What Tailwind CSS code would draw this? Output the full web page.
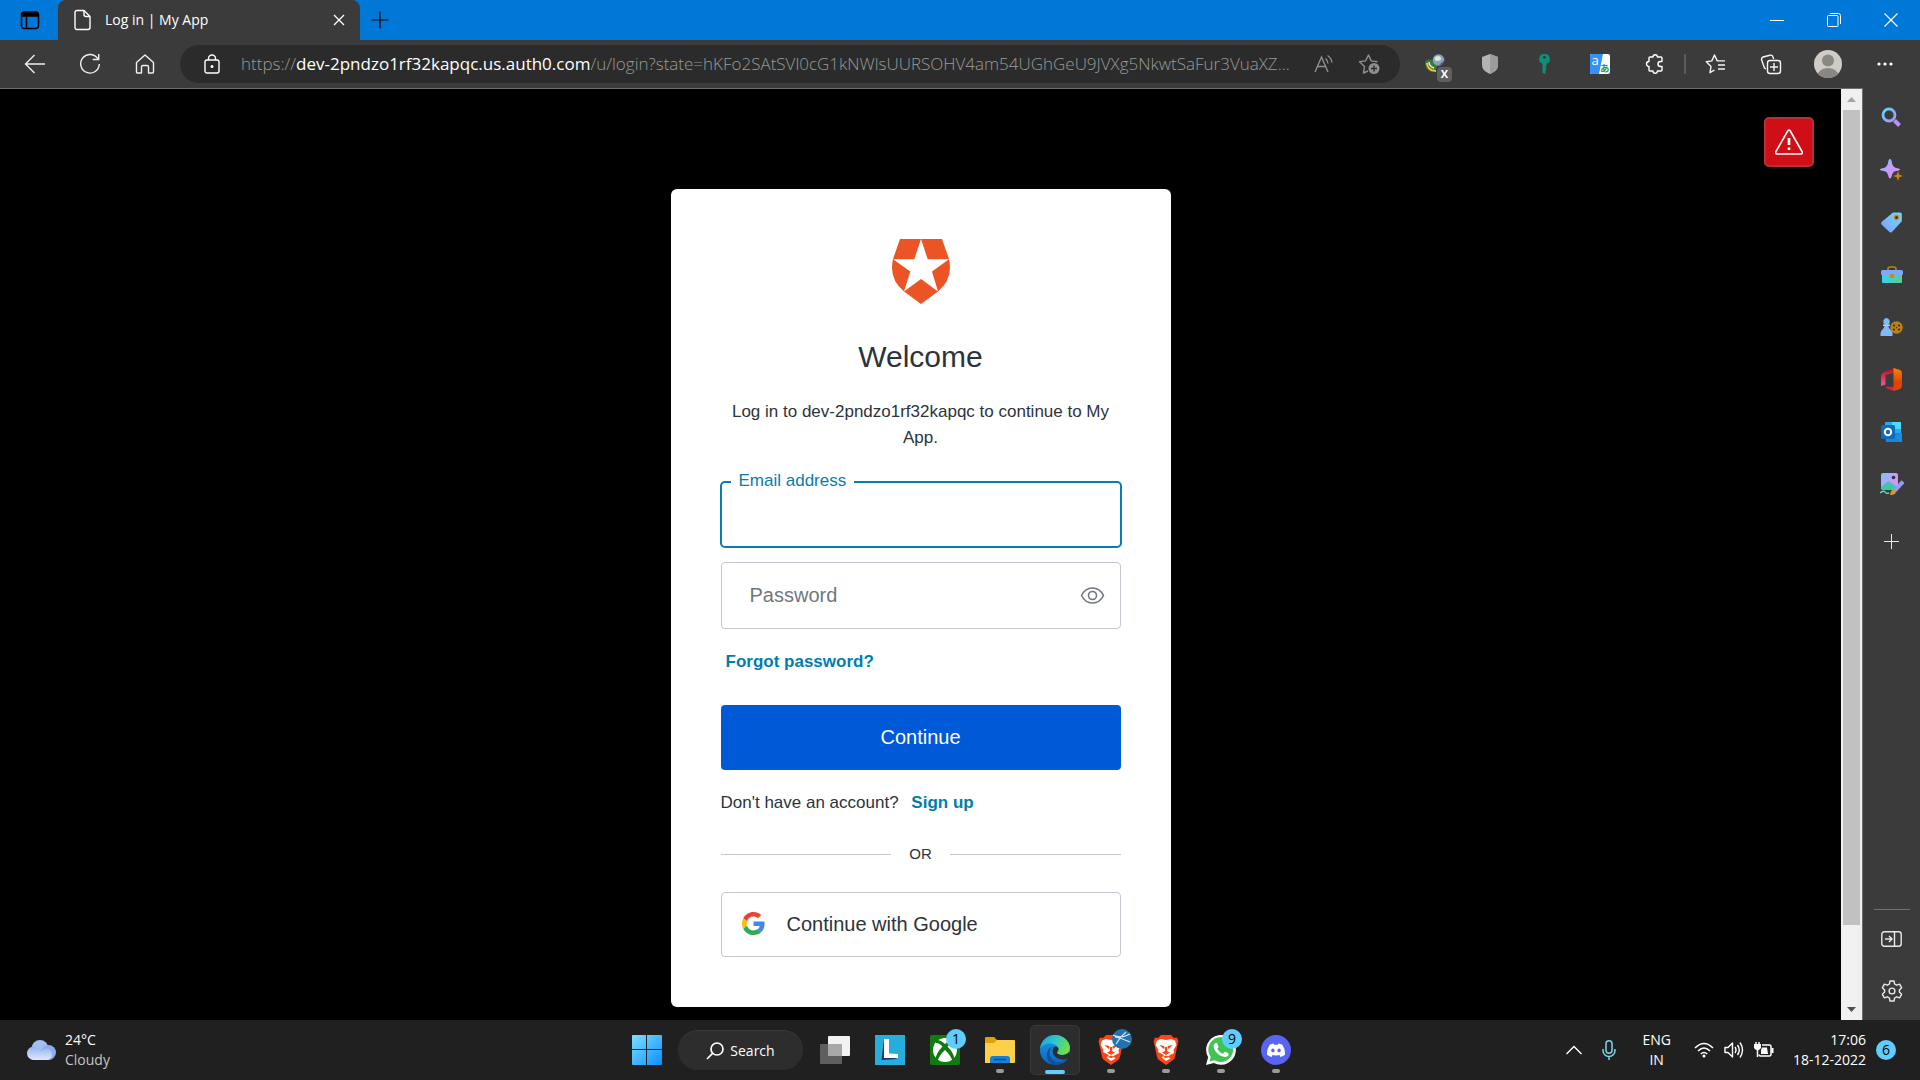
<!DOCTYPE html>
<html lang="en">
<head>
  <meta charset="UTF-8" />
  <meta name="viewport" content="width=device-width, initial-scale=1.0" />
  <title>Log in | My App</title>
  <script src="https://cdn.jsdelivr.net/npm/@tailwindcss/browser@4"></script>
</head>
<body class="min-h-screen flex flex-col bg-[#3b3b3b] text-white font-['Open_Sans','Noto_Sans',sans-serif]">

  <!-- Tab strip -->
  <header>
    <div class="flex h-10 bg-[#0078d7]">
      <button aria-label="Tab actions" class="w-[58px] pl-0.5 flex items-center justify-center text-black">
        <svg width="20" height="20" viewBox="0 0 20 20" fill="none" stroke="currentColor" stroke-width="1.5"><rect x="1.5" y="2" width="17" height="16.5" rx="3"/><path d="M2 4.5h16" stroke-width="4.5"/><path d="M6.5 6v12"/></svg>
      </button>
      <div class="w-[302px] flex items-center bg-[#3b3b3b] rounded-t-lg pl-4 pr-[11px]">
        <svg width="18" height="22" viewBox="0 0 18 22" fill="none" stroke="#fff" stroke-width="1.4" stroke-linejoin="round"><path d="M3 1.5h7l6 6v11a2 2 0 0 1-2 2H3a2 2 0 0 1-2-2v-15a2 2 0 0 1 2-2z"/><path d="M10 1.5v4a2 2 0 0 0 2 2h4"/></svg>
        <span class="ml-[13px] flex-1 text-sm">Log in | My App</span>
        <button aria-label="Close tab" class="p-1">
          <svg width="12" height="12" viewBox="0 0 12 12" stroke="#fff" stroke-width="1.3"><path d="M1 1l10 10M11 1L1 11"/></svg>
        </button>
      </div>
      <button aria-label="New tab" class="w-10 flex items-center justify-center">
        <svg width="18" height="18" viewBox="0 0 18 18" stroke="#000" stroke-width="1.2"><path d="M9 .5v17M.5 9h17"/></svg>
      </button>
      <div class="ml-auto flex">
        <button aria-label="Minimize" class="w-[57px] flex items-center justify-center"><svg width="14" height="14" stroke="#fff"><path d="M0 7.500h14"/></svg></button>
        <button aria-label="Restore" class="w-[57px] flex items-center justify-center"><svg width="14" height="14" viewBox="0 0 14 14" fill="none" stroke="#fff"><rect x=".5" y="2.500" width="10.500" height="11" rx="1"/><path d="M3 .5h8.500a2 2 0 0 1 2 2v8.500"/></svg></button>
        <button aria-label="Close" class="w-[58px] flex items-center justify-center"><svg width="14" height="14" viewBox="0 0 14 14" stroke="#fff" stroke-width="1.1"><path d="M.5.5l13 13M13.500.5l-13 13"/></svg></button>
      </div>
    </div>

    <!-- Toolbar -->
    <div class="flex items-center h-12 px-[7px]">
      <button aria-label="Back" class="w-[55px] flex justify-center"><svg width="22" height="20" viewBox="0 0 22 20" fill="none" stroke="#f0f0f0" stroke-width="1.4"><path d="M21 10H1.500M10.500 1l-9 9 9 9"/></svg></button>
      <button aria-label="Refresh" class="w-[55px] flex justify-center"><svg width="22" height="22" viewBox="0 0 22 22" fill="none" stroke="#f0f0f0" stroke-width="1.4"><path d="M19 6A9.300 9.300 0 1 0 20.300 11"/><path d="M19.700 1v5.500h-6"/></svg></button>
      <button aria-label="Home" class="w-[55px] flex justify-center"><svg width="20" height="22" viewBox="0 0 20 22" fill="none" stroke="#f0f0f0" stroke-width="1.4" stroke-linejoin="round"><path d="M1.500 9.500L10 2l8.500 7.500V19a1 1 0 0 1-1 1h-4v-6a1.500 1.500 0 0 0-1.500-1.500H8A1.500 1.500 0 0 0 6.500 14v6h-4a1 1 0 0 1-1-1z"/></svg></button>
      <div class="flex-1 min-w-0 h-[38px] ml-2 mr-[7px] flex items-center rounded-full bg-[#2b2b2b] pl-6">
        <svg class="shrink-0" width="16" height="20" viewBox="0 0 16 20" fill="none" stroke="#fff" stroke-width="1.400"><rect x="1" y="6" width="14" height="13" rx="2"/><path d="M4.500 6V4.500a3.500 3.500 0 0 1 7 0V6"/><circle cx="8" cy="12.500" r=".8" fill="#fff"/></svg>
        <p class="ml-[21px] flex-1 min-w-0 overflow-hidden whitespace-nowrap text-[17px] font-light text-[#9a9a9a]">https://<span class="font-normal text-white">dev-2pndzo1rf32kapqc.us.auth0.com</span>/u/login?state=hKFo2SAtSVl0cG1kNWlsUURSOHV4am54UGhGeU9JVXg5NkwtSaFur3VuaXZ...</p>
        <button aria-label="Read aloud" class="w-6 mr-[10px] shrink-0 flex justify-center"><svg width="20" height="20" viewBox="0 0 20 20" fill="none" stroke="#8f8f8f" stroke-width="1.400"><path d="M1 18L7.500 3 14 18M3.500 12.500h8"/><path d="M11.500 4.500a7 7 0 0 1 2.500 5M13.500 1.500a10 10 0 0 1 4.500 7"/></svg></button>
        <button aria-label="Add to favorites" class="w-[54px] pr-2 shrink-0 flex justify-center"><svg width="22" height="22" viewBox="0 0 22 22" fill="none" stroke="#8f8f8f" stroke-width="1.400" stroke-linejoin="round"><path d="M10 18l-4.500 2 1-6.500L1.500 8.800l6-.9L10.500 2l2.700 5.900 6.300.9"/><circle cx="16" cy="15.500" r="5.500" fill="#8f8f8f" stroke="none"/><path d="M16 12.500v6M13 15.500h6" stroke="#2b2b2b"/></svg></button>
      </div>
      <button aria-label="Download manager" class="relative w-[55px] flex justify-center">
        <svg width="22" height="20" viewBox="0 0 22 20"><path d="M1 8c2-3 6-3 8-1l5 3-3 8c-5 1-10-3-10-10z" fill="#3c7a35"/><path d="M3 9c0 4 3 8 9 8" fill="none" stroke="#e8c34a" stroke-width="2"/><path d="M5 8c0 3 2 5 5 6" fill="none" stroke="#e9e9e9" stroke-width="1.500"/><circle cx="14.500" cy="6" r="5.800" fill="#8aa0c8"/><path d="M11 3c3-2 5-1 6 1s-2 3-4 3-3-2-2-4z" fill="#dfe6cf"/><path d="M15 10c2 0 4-2 5-4 0 4-3 6-5 4z" fill="#54585f"/></svg>
        <span class="absolute left-[30px] top-[13px] w-[15px] h-[15px] rounded-sm bg-[#5f5f5f] text-[11px] leading-[14px] font-bold text-center">X</span>
      </button>
      <button aria-label="Shield" class="w-[55px] flex justify-center"><svg width="16" height="20" viewBox="0 0 16 20"><path d="M8 0l8 3v8c0 5-4 7-8 9-4-2-8-4-8-9V3z" fill="#b4b4b4"/><path d="M8 0l8 3v8c0 5-4 7-8 9z" fill="#9b9b9b"/></svg></button>
      <button aria-label="Key" class="w-[55px] flex justify-center"><svg width="11" height="20" viewBox="0 0 11 20"><path fill-rule="evenodd" d="M5.500 0a5 5 0 0 1 2 9.700v2.300l-1 1 1 1-1 1 1 1-1 1v2l-1 1-2-1V9.700A5 5 0 0 1 5.500 0zm0 1.800a1.500 1.500 0 1 0 0 3 1.500 1.500 0 0 0 0-3z" fill="#0d8f76"/></svg></button>
      <button aria-label="Translate" class="w-[55px] flex justify-center"><svg width="20" height="20" viewBox="0 0 20 20"><rect width="20" height="20" rx="2" fill="#fff"/><path d="M2 0h11L9 20H2a2 2 0 0 1-2-2V2a2 2 0 0 1 2-2z" fill="#3490fa"/><text x="1.500" y="11" font-size="13" fill="#fff" font-family="Open Sans">a</text><text x="10" y="18" font-size="9.500" font-weight="bold" fill="#37963a" font-family="Noto Sans CJK JP">あ</text></svg></button>
      <button aria-label="Extensions" class="w-[55px] flex justify-center"><svg width="20" height="20" viewBox="0 0 20 20" fill="none" stroke="#fff" stroke-width="1.400" stroke-linejoin="round"><path d="M5 3h3a2.200 2.200 0 0 1 4.400 0H16a1 1 0 0 1 1 1v3.500h-1.500a2.400 2.400 0 0 0 0 5H17V16a1 1 0 0 1-1 1h-3.600a2.200 2.200 0 0 1-4.400 0H5a1 1 0 0 1-1-1v-3.500a2.500 2.500 0 0 1 0-5V4a1 1 0 0 1 1-1z"/></svg></button>
      <div class="w-[2px] h-5 mx-[2px] bg-[#5c5c5c]"></div>
      <button aria-label="Favorites" class="w-[55px] flex justify-center"><svg width="21" height="20" viewBox="0 0 21 20" fill="none" stroke="#f5f5f5" stroke-width="1.400" stroke-linejoin="round"><path d="M9.500 16L5 18.700l1-6.200L1.300 7.800l5.500-.9L9.500 1l2.700 5.900H20M13 11h7M13 15h7"/></svg></button>
      <button aria-label="Collections" class="w-[55px] flex justify-center"><svg width="22" height="21" viewBox="0 0 22 21" fill="none" stroke="#f5f5f5" stroke-width="1.400"><path d="M6 15l-1.500-1L1.500 5.500A2.500 2.500 0 0 1 3 3l7-1.800A2.500 2.500 0 0 1 13 3l.6 2"/><rect x="7.500" y="6.500" width="13" height="13" rx="2.500"/><path d="M14 9v8M10 13h8"/></svg></button>
      <button aria-label="Profile" class="w-[59px] flex justify-center"><svg width="28" height="28" viewBox="0 0 28 28"><defs><clipPath id="av"><circle cx="14" cy="14" r="14"/></clipPath></defs><g clip-path="url(#av)"><path d="M0 0h28v28H0z" fill="#cfccc8"/><circle cx="14" cy="10.500" r="6" fill="#8b8783"/><ellipse cx="14" cy="26" rx="10.500" ry="8" fill="#8b8783"/></g></svg></button>
      <button aria-label="Settings and more" class="w-[56px] flex justify-center"><svg width="18" height="4" fill="#fff"><circle cx="3" cy="2" r="1.600"/><circle cx="9" cy="2" r="1.600"/><circle cx="15" cy="2" r="1.600"/></svg></button>
    </div>
  </header>

  <div class="flex-1 flex">
    <!-- Web page -->
    <div class="flex-1 flex border-t border-r border-[#6e6e6e]">
      <main class="relative flex-1 bg-black pt-[100px] pb-[13px] font-['Liberation_Sans',Arial,sans-serif] text-[17px] leading-[26px] text-[#2d333a]">
        <section class="w-[500px] mx-auto rounded-[6px] bg-white p-[50px]">
          <svg class="mx-auto" width="60" height="65" viewBox="0 0 60 65" fill="#eb5424"><path d="M9 0H51L58 20Q62.500 40 47 52.500L30 65 13 52.500Q-2.500 40 2 20Z"/><path fill="#fff" d="M30 0l6.700 20.300H58L41 32.500 47 52.500 30 40 13 52.500l6.300-20L2 20.300H23.300z"/></svg>
          <h1 class="mt-[35px] text-[30px] leading-9 text-center">Welcome</h1>
          <p class="mt-6 text-center">Log in to dev-2pndzo1rf32kapqc to continue to My App.</p>
          <form>
            <div class="relative -mx-px mt-[30px]">
              <label for="email" class="absolute left-[11px] -top-[13px] px-2 bg-white text-[#0a7cad]">Email address</label>
              <input id="email" type="email" class="block w-full h-[67px] px-7 text-xl border-2 border-[#0a7cad] rounded-[5px] outline-none">
            </div>
            <div class="relative mt-[14px]">
              <input id="password" type="password" aria-label="Password" placeholder="Password" class="block w-full h-[67px] px-7 text-xl border border-[#c2c8d0] rounded-[4px] placeholder:text-[#6f7780]">
              <button type="button" aria-label="Show password" class="absolute right-4 top-[25px]"><svg width="25" height="17" viewBox="0 0 25 17" fill="none" stroke="#6f7780" stroke-width="1.600"><path d="M1.500 8.500C4 3.500 8 1 12.500 1s8.500 2.500 11 7.500C21 13.500 17 16 12.500 16S4 13.500 1.500 8.500z"/><circle cx="12.500" cy="8.500" r="4"/></svg></button>
            </div>
            <a href="#" class="inline-block mt-5 ml-[5px] align-top font-bold text-[#007ead]">Forgot password?</a>
            <button type="submit" class="block w-full h-[65px] pb-0.5 mt-[30px] rounded-[4px] bg-[#0059d6] text-xl text-white">Continue</button>
          </form>
          <p class="mt-5">Don't have an account? <a href="#" class="ml-2 font-bold text-[#007ead]">Sign up</a></p>
          <div class="mt-7 flex items-center gap-[18px] text-[15px] leading-5">
            <hr class="flex-1 border-[#c2c8d0]"><span>OR</span><hr class="flex-1 border-[#c2c8d0]">
          </div>
          <button class="mt-7 w-full h-[65px] pb-0.5 flex items-center pl-5 gap-[22px] border border-[#c2c8d0] rounded-[4px] text-xl">
            <svg width="23" height="23" viewBox="0 0 48 48"><path fill="#EA4335" d="M24 9.500c3.540 0 6.710 1.220 9.210 3.600l6.850-6.850C35.900 2.380 30.470 0 24 0 14.620 0 6.510 5.380 2.560 13.220l7.980 6.190C12.430 13.720 17.740 9.500 24 9.500z"/><path fill="#4285F4" d="M46.980 24.550c0-1.570-.15-3.090-.38-4.550H24v9.020h12.940c-.58 2.960-2.260 5.480-4.780 7.180l7.730 6c4.510-4.180 7.090-10.360 7.090-17.650z"/><path fill="#FBBC05" d="M10.530 28.590c-.48-1.450-.76-2.990-.76-4.590s.27-3.140.76-4.590l-7.980-6.190C.92 16.460 0 20.120 0 24c0 3.880.92 7.540 2.560 10.780l7.970-6.190z"/><path fill="#34A853" d="M24 48c6.480 0 11.930-2.130 15.890-5.810l-7.730-6c-2.150 1.450-4.920 2.300-8.160 2.300-6.260 0-11.570-4.220-13.470-9.910l-7.980 6.190C6.510 42.620 14.620 48 24 48z"/></svg>
            Continue with Google
          </button>
        </section>
        <button aria-label="Development keys warning" class="absolute top-7 right-[27px] w-[50px] h-[50px] flex items-center justify-center rounded-[5px] border-2 border-[#b03434] bg-[#d00e17]">
          <svg width="28" height="28" viewBox="0 0 28 28" fill="none" stroke="#fff" stroke-width="1.600" stroke-linejoin="round"><path d="M13 2.500a1.200 1.200 0 0 1 2 0l12 21a1.500 1.500 0 0 1-1 2.500H2a1.500 1.500 0 0 1-1-2.500z"/><path d="M14 10v7M14 19.500v2.500" stroke-width="2.600"/></svg>
        </button>
      </main>
      <!-- Scrollbar -->
      <div class="w-[21px] flex flex-col items-center bg-[#f0f0f0]">
        <svg class="my-2" width="9" height="5" fill="#a3a3a3"><path d="M4.500 0L9 5H0z"/></svg>
        <div class="w-[17px] flex-1 bg-[#c1c1c1]"></div>
        <svg class="mt-[82px] mb-2" width="9" height="5" fill="#505050"><path d="M0 0h9L4.500 5z"/></svg>
      </div>
    </div>

    <!-- Edge sidebar -->
    <aside class="w-[57px] flex flex-col items-center">
      <svg width="0" height="0" class="absolute"><defs>
        <linearGradient id="bl" x1="0" y1="0" x2="1" y2="1"><stop stop-color="#5fd5fb"/><stop offset="1" stop-color="#a895fb"/></linearGradient>
        <linearGradient id="tg" x1="1" y1="0" x2="0" y2="1"><stop stop-color="#6fd8fb"/><stop offset="1" stop-color="#7f9ff8"/></linearGradient>
        <linearGradient id="sp" x1="0" y1="0" x2="1" y2="1"><stop stop-color="#6bc9fc"/><stop offset=".5" stop-color="#c79bfb"/><stop offset="1" stop-color="#e58bf0"/></linearGradient>
        <linearGradient id="tb" x1="0" y1="0" x2="1" y2="0"><stop stop-color="#36d3f3"/><stop offset="1" stop-color="#61c98a"/></linearGradient>
        <linearGradient id="of" x1="0" y1="0" x2="0" y2="1"><stop stop-color="#f58a00"/><stop offset=".6" stop-color="#e04400"/></linearGradient>
        <linearGradient id="ol" x1="0" y1="0" x2="0" y2="1"><stop stop-color="#b3101a"/><stop offset="1" stop-color="#f05a9a"/></linearGradient>
        <linearGradient id="win" x1="0" y1="0" x2="1" y2="1"><stop stop-color="#7fe0ff"/><stop offset="1" stop-color="#0a8eff"/></linearGradient>
      </defs></svg>
      <nav class="w-full h-[420px] grid grid-rows-8 mt-[3px]">
        <button aria-label="Search" class="flex items-center justify-center"><svg width="21" height="21" viewBox="0 0 21 21" fill="none"><circle cx="8" cy="8" r="6" stroke="url(#bl)" stroke-width="2.800"/><path d="M13.500 13.500l5 5" stroke="#b790f8" stroke-width="4"/></svg></button>
        <button aria-label="Discover" class="flex items-center justify-center"><svg width="23" height="22" viewBox="0 0 23 22"><path d="M10 0q1.500 0 2 4 .8 4 4 5 4 .5 4 1.500t-4 1.500q-3 .5-4 4-.8 3.500-2 3.500T8 16q-.8-3.500-4-4-4-.5-4-1.500T4 9q3-1 4-5 .5-4 2-4z" fill="url(#sp)"/><path d="M18 12l1.300 3.700L23 17l-3.700 1.300L18 22l-1.300-3.700L13 17l3.700-1.300z" fill="#c08a10"/></svg></button>
        <button aria-label="Shopping" class="flex items-center justify-center"><svg width="21" height="21" viewBox="0 0 21 21"><path d="M12 .5h7a1.800 1.800 0 0 1 1.800 1.800v7L11 20a2 2 0 0 1-2.500 0L.6 12.500a2 2 0 0 1 0-2.500z" fill="url(#tg)"/><circle cx="15.500" cy="5.500" r="2.700" fill="#c98a1b"/><circle cx="15.500" cy="5.500" r="1.300" fill="#222"/></svg></button>
        <button aria-label="Tools" class="flex items-center justify-center"><svg width="22" height="17" viewBox="0 0 22 17"><path d="M7 5V3a2 2 0 0 1 2-2h4a2 2 0 0 1 2 2v2" fill="none" stroke="#b98418" stroke-width="1.600"/><rect x="1" y="7" width="20" height="10" rx="1" fill="url(#tb)"/><rect y="4" width="22" height="5" rx="1.500" fill="#7fa8f8"/><rect x="9" y="8" width="4" height="4" rx="1" fill="#c58b16"/></svg></button>
        <button aria-label="Games" class="flex items-center justify-center"><svg width="23" height="18" viewBox="0 0 23 18"><circle cx="16.500" cy="9.500" r="6.200" fill="#b98116"/><g fill="#3b2a08"><circle cx="14" cy="7.500" r="1.100"/><circle cx="19" cy="7.500" r="1.100"/><circle cx="14" cy="11.500" r="1.100"/><circle cx="19" cy="11.500" r="1.100"/><circle cx="16.500" cy="9.500" r=".7"/></g><path d="M6.500 0a3.500 3.500 0 0 1 2 6.200V8c0 3 3.500 4 4 7v3H.5v-3c.5-3 3.500-4 4-7V6.200A3.500 3.500 0 0 1 6.500 0z" fill="#82b9fb"/><path d="M3 6.500h7v1.500H3z" fill="#a4cffd"/></svg></button>
        <button aria-label="Office" class="flex items-center justify-center"><svg width="21" height="23" viewBox="0 0 21 23"><path d="M13 0L2 4.500Q0 5.500 0 8v10l4.500-1.500V7L13 5z" fill="url(#ol)"/><path d="M4.500 18.500L13 19v4L5.500 20.300z" fill="#e02040"/><path d="M12.500 0l6.500 2q2 .8 2 3v13q0 2.200-2 3l-6.500 2z" fill="url(#of)"/></svg></button>
        <button aria-label="Outlook" class="flex items-center justify-center"><svg width="21" height="21" viewBox="0 0 21 21"><rect x="4" y="0" width="16" height="14" rx="1" fill="#2aa8ea"/><path d="M11 0h9v7h-9z" fill="#50d9ff"/><path d="M4 11l17 0v9H5z" fill="#1a86d8"/><path d="M21 11v9l-9-5z" fill="#1590e4"/><rect y="3" width="14" height="14" rx="1.500" fill="#0f69c0"/><circle cx="7" cy="10" r="3.200" fill="none" stroke="#fff" stroke-width="2"/></svg></button>
        <button aria-label="Image creator" class="flex items-center justify-center"><svg width="24" height="23" viewBox="0 0 24 23"><rect x="1" width="17" height="17" rx="2" fill="url(#sp)"/><path d="M1 14l6-5q1.500-1 3 0l8 6v2H3q-2 0-2-2z" fill="#3cc7a5"/><circle cx="13.500" cy="4.500" r="1.800" fill="#333"/><path d="M23 8.500L14.500 18" stroke="#8f9cf8" stroke-width="4"/><path d="M10 22q.5-5 3.500-5.500l2.500 2.500q-1 3.500-6 3z" fill="#d09a28"/><path d="M0 20q4-3 5-1t4 1" fill="none" stroke="#56dbc0" stroke-width="1.500"/></svg></button>
      </nav>
      <button aria-label="Add site" class="h-[52px] mt-1 flex items-center"><svg width="15" height="15" stroke="#e8e8e8"><path d="M7.500 0v15M0 7.500h15"/></svg></button>
      <div class="mt-auto mb-[3px] w-9 h-px bg-[#707070]"></div>
      <button aria-label="Hide sidebar" class="h-[52px] flex items-center"><svg width="21" height="16" viewBox="0 0 21 16" fill="none" stroke="#e8e8e8" stroke-width="1.400"><rect x=".8" y=".8" width="19.400" height="14.400" rx="2.500"/><path d="M13.500 1v14M4 8h7M8 5l3 3-3 3"/></svg></button>
      <button aria-label="Sidebar settings" class="h-[52px] mb-[3px] flex items-center"><svg width="22" height="22" viewBox="0 0 22 22" fill="none" stroke="#e8e8e8" stroke-width="1.400" stroke-linejoin="round"><path d="M9 1h4l.6 3 2 1.200 3-1 2 3.500L18.400 10v2l2.200 2.300-2 3.500-3-1-2 1.200L13 21H9l-.6-3-2-1.200-3 1-2-3.500L3.600 12v-2L1.400 7.700l2-3.500 3 1 2-1.200z"/><circle cx="11" cy="11" r="2.900"/></svg></button>
    </aside>
  </div>

  <!-- Taskbar -->
  <footer class="h-[60px] grid grid-cols-[1fr_auto_1fr] items-center bg-[#202020] text-sm leading-5">
    <div class="flex items-center gap-[9px] pl-[26px]">
      <svg width="30" height="20" viewBox="0 0 30 20"><defs><linearGradient id="cl" x1="0" y1="0" x2="0" y2="1"><stop stop-color="#8fb4f0"/><stop offset="1" stop-color="#dfe8fb"/></linearGradient></defs><circle cx="14" cy="8.500" r="8.500" fill="#a3c0f2"/><circle cx="22.500" cy="12.500" r="7.500" fill="#8dacea"/><path d="M7 6.500a7 7 0 0 1 7 6q2-4 7-4a6 6 0 0 1 1 11.500H7A6.800 6.800 0 0 1 7 6.500z" fill="url(#cl)"/></svg>
      <div><p>24°C</p><p class="text-[#c4c4c4]">Cloudy</p></div>
    </div>

    <div class="flex items-center pl-0.5">
      <button aria-label="Start" class="w-[55px] flex justify-center"><svg width="30" height="30" fill="url(#win)"><path d="M1 0h13v14H0V1a1 1 0 0 1 1-1zM15 0h14a1 1 0 0 1 1 1v13H15zM0 15h14v15H1a1 1 0 0 1-1-1zM15 15h15v14a1 1 0 0 1-1 1H15z"/></svg></button>
      <button class="w-[125px] h-10 mx-1 flex items-center justify-center gap-[6px] rounded-full bg-[#2d2d2d] border-t border-[#3a3a3a]">
        <svg width="18" height="18" viewBox="0 0 18 18" fill="none" stroke="#fff" stroke-width="1.700"><circle cx="11" cy="7" r="6"/><path d="M6.800 11.200L1 17"/></svg>
        Search
      </button>
      <button aria-label="Task view" class="w-[55px] flex justify-center"><svg width="30" height="28" viewBox="0 0 30 28"><rect y="8" width="22" height="20" rx="1" fill="#5f5f5f"/><rect x="8" width="22" height="20" rx="1" fill="#f2f2f2"/><path d="M8 8h14v12H8z" fill="#a8a8a8"/></svg></button>
      <button aria-label="Lenovo Vantage" class="w-[55px] flex justify-center"><svg width="30" height="30" viewBox="0 0 30 30"><path d="M0 0h30v30H0z" fill="#27addb"/><path d="M9 4L6.500 25l16-1L11 20z" fill="#123a66"/><path d="M9 4h5v14.500l9 .5v4H9z" fill="#fff"/></svg></button>
      <button aria-label="Xbox" class="relative w-[55px] flex justify-center"><svg width="30" height="30" viewBox="0 0 30 30"><rect width="30" height="30" rx="2" fill="#107c10"/><circle cx="15" cy="15" r="12" fill="#fff"/><path d="M5 5q4-1 10 4 6-5 10-4l-1 3q-3-.5-6.500 3.500 6 6 7 12.500l-2 2q-2-6-7.500-11Q9.500 20 7.500 26l-2-2q1-6.500 7-12.500Q9 7.500 6 8z" fill="#107c10"/></svg><span class="absolute left-[29px] -top-[6px] w-5 h-5 rounded-full bg-[#60cdff] text-black text-sm leading-5 text-center">1</span></button>
      <button aria-label="File Explorer" class="relative w-[55px] h-[50px] flex items-center justify-center"><svg width="30" height="26" viewBox="0 0 30 26"><path d="M1 0h8l3 3v6H0V1a1 1 0 0 1 1-1z" fill="#e0a008"/><path d="M0 6h9l3-3h17a1 1 0 0 1 1 1v21a1 1 0 0 1-1 1H0z" fill="#fdd04a"/><path d="M5 26v-4a3 3 0 0 1 3-3h14a3 3 0 0 1 3 3v4z" fill="#1480d8"/><path d="M9 22.500h12" stroke="#0a4a90" stroke-width="1.500"/></svg><span class="absolute bottom-0.5 w-2 h-1 rounded-full bg-[#9a9a9a]"></span></button>
      <button aria-label="Microsoft Edge" class="relative w-[50px] h-[50px] mx-[3px] flex items-center justify-center rounded-[5px] border border-[#383838] bg-[#2d2d2d]"><svg width="30" height="30" viewBox="0 0 30 30"><defs><linearGradient id="e1" x1="0" y1="0" x2="1" y2=".4"><stop stop-color="#1b9de2"/><stop offset=".5" stop-color="#2cc3d4"/><stop offset="1" stop-color="#6be04a"/></linearGradient><linearGradient id="e2" x1="0" y1="0" x2="0" y2="1"><stop stop-color="#1a9de0"/><stop offset="1" stop-color="#0b63bf"/></linearGradient></defs><circle cx="15" cy="15" r="15" fill="url(#e2)"/><path d="M0 14C1 5 8 0 15 0c9 0 15 7 15 12.500 0 5-4 7.500-8 7.500-3 0-5-1-5-2.500 0-1 1.500-1.500 1.500-3.500 0-3-4-5.500-8.500-5.500C5 8.500 1 11 0 14z" fill="url(#e1)"/><path d="M12 12c-3 3-3.500 8 0 12 4 4.500 10 4 16 0-3 4-8 6-13 6C9 29 7 24 7 20.500 7 16 9 13 12 12z" fill="#124f9c"/><path d="M18.500 14c0 2-1.500 2.500-1.500 3.500 0 1.500 2 2.500 5 2.500 3 0 5.500-1 7.500-3v4.500l-1.500 2c-3 1.500-7 1.500-10 0-5-2.500-7-8-4-11.500 2-1.500 4.500 0 4.500 2z" fill="#2d2d2d"/></svg><span class="absolute bottom-0 w-5 h-1 rounded-full bg-[#60cdff]"></span></button>
      <button aria-label="Brave profile" class="relative w-[55px] h-[50px] flex items-center justify-center"><svg width="26" height="30" viewBox="0 0 26 30"><path id="brave" d="M8 0h10l3 3 3-.5 1.500 4-1 3.500L22 22q-.5 2-2 3l-7 5-7-5q-1.500-1-2-3L1.500 10l-1-3.500 1.500-4L5 3z" fill="#fb4513"/><path id="lion" d="M4 5.500l4-1.500 5 1 5-1 4 1.500 1.500 4.500-3 5 .5 3-4 2-2 1.500 2.500 2L13 26l-4.500-3.500 2.500-2L9 19l-4-2 .5-2-3-5z" fill="#fff"/><path id="face" d="M6.500 10l5 1-1 3zM19.500 10l-5 1 1 3zM11.500 12h3l-.5 4 3 1.500-4 2.500-4-2.500 3-1.500zM9.500 22l3.500-1.500 3.500 1.500-3.500 1z" fill="#fb4513"/></svg><svg class="absolute left-[29px] top-1" width="20" height="20" viewBox="0 0 20 20"><circle cx="10" cy="10" r="10" fill="#2472ad"/><path d="M1 6q8 4 17-1M4 15q4-7 10-12M3 8q6 1 15 5" fill="none" stroke="#d3e8f7" stroke-width="1.200"/></svg><span class="absolute bottom-0.5 w-2 h-1 rounded-full bg-[#9a9a9a]"></span></button>
      <button aria-label="Brave" class="relative w-[55px] h-[50px] flex items-center justify-center"><svg width="26" height="30" viewBox="0 0 26 30"><use href="#brave"/><use href="#lion"/><use href="#face"/></svg><span class="absolute bottom-0.5 w-2 h-1 rounded-full bg-[#9a9a9a]"></span></button>
      <button aria-label="WhatsApp" class="relative w-[55px] h-[50px] flex items-center justify-center"><svg width="30" height="30" viewBox="0 0 24 24"><path d="M0 24l1.700-6.200A11.900 11.900 0 1 1 6.300 22.300z" fill="#fff"/><path d="M2.800 21.200l1-3.700a9.900 9.900 0 1 1 3 2.700z" fill="#3fc351"/><path fill="#fff" d="M17.470 14.380c-.3-.15-1.760-.87-2.030-.97-.27-.1-.47-.15-.67.150-.2.300-.770.970-.940 1.160-.170.200-.350.220-.640.080-.300-.150-1.260-.460-2.390-1.480-.880-.790-1.480-1.760-1.650-2.060-.170-.300-.020-.460.130-.600.130-.140.300-.350.450-.520.150-.170.200-.300.300-.500.100-.200.050-.370-.030-.520-.080-.150-.670-1.610-.910-2.210-.240-.580-.490-.500-.670-.510h-.570c-.200 0-.520.070-.790.370-.270.300-1.040 1.020-1.040 2.480s1.070 2.880 1.210 3.070c.150.200 2.100 3.200 5.080 4.490 3 1.170 3 .780 3.540.730.540-.050 1.760-.720 2.010-1.410.250-.700.250-1.290.170-1.410-.070-.130-.270-.200-.570-.350z"/></svg><span class="absolute left-[29px] top-1 w-5 h-5 rounded-full bg-[#60cdff] text-black text-sm leading-5 text-center">9</span><span class="absolute bottom-0.5 w-2 h-1 rounded-full bg-[#9a9a9a]"></span></button>
      <button aria-label="Discord" class="relative w-[55px] h-[50px] flex items-center justify-center"><svg width="30" height="30" viewBox="0 0 30 30"><circle cx="15" cy="15" r="15" fill="#5865f2"/><path fill-rule="evenodd" d="M12.500 8.500l.7 1.300q1.800-.3 3.600 0l.7-1.300q2 .3 3.800 1.200 3.200 4.800 2.700 10-2 1.500-4.500 2.200l-1-1.600 1.400-.8q-4.900 2-9.800 0l1.400.8-1 1.600Q8 21.200 6 19.700q-.500-5.200 2.700-10 1.800-.9 3.800-1.200zM11.900 13.500a1.700 1.900 0 1 0 0 3.800 1.700 1.900 0 0 0 0-3.800zm6.200 0a1.700 1.900 0 1 0 0 3.800 1.700 1.900 0 0 0 0-3.800z" fill="#fff"/></svg><span class="absolute bottom-0.5 w-2 h-1 rounded-full bg-[#9a9a9a]"></span></button>
    </div>

    <div class="flex items-center justify-end pr-6">
      <button aria-label="Show hidden icons" class="mr-5"><svg width="16" height="10" fill="none" stroke="#fff" stroke-width="1.400"><path d="M.5 9L8 1.500 15.500 9"/></svg></button>
      <button aria-label="Microphone in use" class="mr-[26px]"><svg width="14" height="20" viewBox="0 0 14 20" fill="none" stroke="#7fd4ea" stroke-width="1.500"><rect x="4" y=".8" width="6" height="12.500" rx="3"/><path d="M1 9v1.500a6 6 0 0 0 12 0V9M7 16.500V20"/></svg></button>
      <button class="mr-[23px] text-center">ENG<br>IN</button>
      <button aria-label="Network, volume and battery" class="flex items-center gap-[10px] mr-[19px]">
        <svg width="20" height="16" viewBox="0 0 20 16" fill="none" stroke="#fff" stroke-width="1.500"><path d="M1 6q9-9 18 0M4 9q6-6 12 0M6.800 12q3.200-3 6.400 0"/><circle cx="10" cy="14" r="1.500" fill="#fff" stroke="none"/></svg>
        <svg width="20" height="18" viewBox="0 0 20 18" fill="none" stroke="#fff" stroke-width="1.400" stroke-linejoin="round"><path d="M1 6.500h3L8.500 2v14L4 11.500H1zM11 6q2 3 0 6M13.500 4q3.500 5 0 10M16 1.500q5 7.500 0 15"/></svg>
        <svg width="20" height="16" viewBox="0 0 20 16" fill="none" stroke="#fff" stroke-width="1.500"><path d="M8 3h7.500A1.500 1.500 0 0 1 17 4.500v8a1.500 1.500 0 0 1-1.500 1.500h-9A1.500 1.500 0 0 1 5 12.500"/><path d="M8 5.500h5l1 6.500H7V8z" fill="#fff" stroke="none"/><path d="M18.500 6v5" stroke-width="2"/><path d="M0 2h7v4L5 8H2L0 6z" fill="#fff" stroke="none"/><path d="M2 0v3M5 0v3M3.500 7v8"/></svg>
      </button>
      <button class="text-right">17:06<br>18-12-2022</button>
      <span class="ml-[10px] w-5 h-5 rounded-full bg-[#60cdff] text-black text-sm leading-5 text-center">6</span>
    </div>
  </footer>
</body>
</html>
